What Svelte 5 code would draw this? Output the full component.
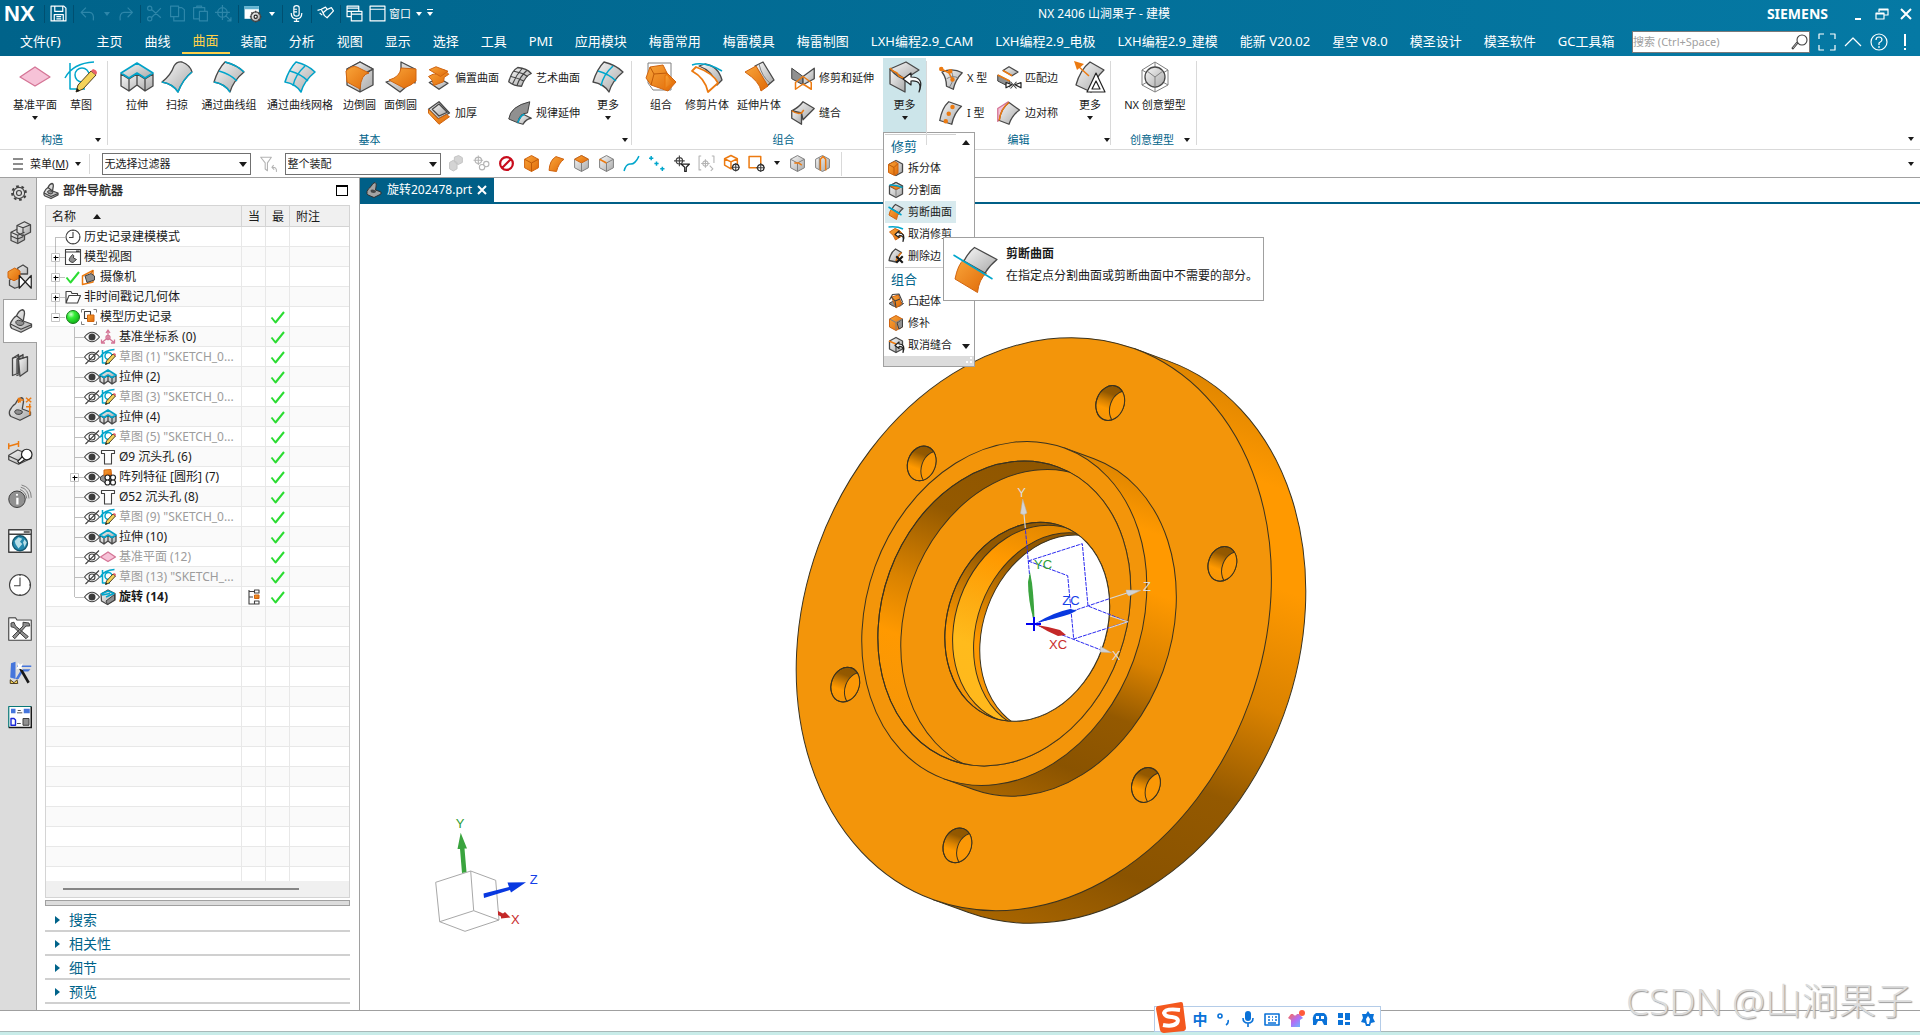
<script lang="ts">
	type Shape = [kind: string, d: string];
	type Tool = { label: string; icon: string; w?: number; arrow?: boolean };
	type TreeRow = {
		label: string;
		icons: string[];
		level: number;
		box?: '+' | '-';
		muted?: boolean;
		bold?: boolean;
		check?: boolean;
		mark?: boolean;
	};

	const dot = (x: number, y: number, r: number) =>
		`M${x - r} ${y}a${r} ${r} 0 1 0 ${2 * r} 0a${r} ${r} 0 1 0 ${-2 * r} 0Z`;

	const sheet = 'M1 21Q5 8 12 1Q24 4 31 11Q20 20 17 31Q12 23 1 21Z';
	const hex = 'M16 1L29 8V24L16 31L3 24V8Z';
	const undoArrow = 'M30 31Q33 18 22 19V23L14 17L22 10V14Q36 15 30 31Z';
	const bracket = 'M2 19Q5 12 10 9Q13 2 18 1Q22 2 20 10L19 16L30 20V24L16 31L4 26Q1 24 2 19Z';

	// every icon is drawn on a 32 x 32 grid
	const icons: Record<string, Shape[]> = {
		plane: [['pink', 'M1 16L16 6L31 16L16 25Z']],
		sketch: [
			['cyan', 'M5 2V28H20M0 17Q8 2 29 1' + dot(17, 14, 7)],
			['yellow', 'M11 31L13 24L26 10L31 14L18 28Z'],
			['red', 'M26 10L28 8Q32 9 32 12L31 14Z'],
			['black', 'M11 31L12 27L15 30Z']
		],
		extrude: [
			['steel', 'M0 13L8 18V30L0 25ZM8 18L16 13V24L8 30ZM16 13L24 18V30L16 24ZM24 18L32 13V25L24 30Z'],
			['steelcyan', 'M0 12L16 2L32 12L24 17L16 12L8 17Z']
		],
		sweep: [
			['steel', 'M1 21Q10 14 13 5Q16 0 21 1Q29 4 31 11Q22 18 17 31Q12 23 1 21Z'],
			['cyan', 'M1 21Q12 23 17 31Q22 18 31 11']
		],
		through: [['steel', sheet], ['cyan', 'M12 1Q24 4 31 11M6 10Q17 13 24 20M1 21Q12 23 17 31']],
		mesh: [['steelcyan', sheet], ['cyan', 'M6 10Q17 13 24 20M21 5Q11 14 9 25']],
		edgeblend: [
			['steel', hex + 'M16 16L29 8M16 16V31'],
			['steel', 'M3 8L16 1L29 8L17 14Z'],
			['orange', 'M2 10Q8 4 13 6L25 12Q17 13 16 28L3 21Z']
		],
		faceblend: [
			['steel', 'M16 1L30 8V22L16 14ZM1 21L14 17L22 25L15 31Z'],
			['orange', 'M16 7L31 8V20Q27 24 19 27L4 19Q15 16 16 7Z']
		],
		offset: [
			['steel', 'M3 22L15 16L28 23L16 31Z'],
			['orange', 'M2 14L8 11Q13 12 14 8L23 5L29 11L23 15L22 21L9 26Q8 18 2 14Z'],
			['orange', 'M3 5L12 1L28 7L18 14Z']
		],
		thicken: [
			['steel', 'M2 11L16 1L30 16L15 24Z'],
			['orange', 'M2 11L15 24L26 18L30 21L16 31L2 16Z'],
			['steel', 'M7 11L16 4L27 15L16 20Z']
		],
		studio: [
			['steel', 'M1 21Q5 6 13 2Q25 3 31 10Q23 13 18 27Q8 27 1 21Z'],
			['fine', 'M4 14Q13 16 21 20M8 7Q19 9 26 14M19 3Q11 12 6 24M25 6Q16 14 12 26']
		],
		law: [
			['dark', 'M1 24Q3 7 29 1L26 16Q15 16 13 29Z'],
			['steel', 'M13 29Q17 19 21 18L31 23Q24 24 20 31Z'],
			['cyan', 'M13 29Q17 18 22 18']
		],
		moremesh: [['steel', sheet], ['cyan', 'M6 10Q17 13 24 20M21 5Q11 14 9 25']],
		combine: [
			['thin', 'M3 2H26V29H8L3 22Z'],
			['orange', 'M1 17L5 6L18 4L22 12L31 21L23 30L6 24Z'],
			['steelO', 'M22 13L28 22L20 28V15Z'],
			['oedge', 'M5 6L9 13L6 24M9 13L22 12']
		],
		trimsheet: [
			['steel', 'M14 3Q27 5 31 19L26 24Q22 10 8 5Z'],
			['owhite', 'M1 10L5 6Q22 12 27 22L17 31Q14 17 1 10Z'],
			['cyan', 'M1 4Q14 0 31 10']
		],
		extendsheet: [
			['steel', 'M12 5L20 1L31 19L24 25Z'],
			['orange', 'M2 11L13 5L25 25L18 30Q17 21 2 11Z'],
			['thin', 'M16 3Q19 16 27 22']
		],
		trimextend: [
			['dark', 'M1 3L16 14V25L1 17Z'],
			['steel', 'M16 14L31 3V17L16 25Z'],
			['oline', 'M16 14L6 22V31L16 24L27 31V22Z']
		],
		sew: [
			['steel', 'M1 13L14 16V31L1 23Z'],
			['steel', 'M1 13Q10 9 16 1L31 10L16 25L14 16Z'],
			['oline', 'M1 13Q8 18 14 16L17 12']
		],
		moretrim: [
			['steel', 'M1 8L17 1L30 9L16 18Z'],
			['steel', 'M1 8Q10 18 16 18V31L1 23Z'],
			['oline', 'M1 7L4 10L8 12L10 15L16 18'],
			['white', 'M30 31Q34 19 22 20V24L14 18L22 12V16Q36 16 30 31Z']
		],
		xform: [
			['steel', 'M4 8Q18 2 31 9Q22 18 19 31L10 27Q10 16 4 8Z'],
			['thin', 'M16 6Q22 17 14 28M10 17Q18 12 26 16'],
			['oline', 'M3 4L13 9L18 18'],
			['odot', dot(3, 4, 3) + dot(15, 7, 3) + dot(18, 18, 3)]
		],
		iform: [
			['steel', 'M1 26Q4 9 13 1L30 7Q20 16 17 31Z'],
			['odot', dot(18, 8, 3) + dot(13, 17, 3) + dot(9, 27, 3)]
		],
		match: [
			['steel', 'M8 6L16 1L28 8L20 13Z'],
			['oline', 'M8 6L20 13'],
			['dark', 'M1 12L17 20V28L1 20Z'],
			['oline', 'M1 12L17 20'],
			['white', 'M12 22L20 25L12 29ZM32 22L24 25L32 29Z'],
			['fine', 'M18 21L26 30M26 21L18 30']
		],
		symmetry: [['pink', 'M1 10L15 1L10 20L1 27Z'], ['steel', 'M3 26Q5 10 16 2L30 12Q20 19 16 31Z'], ['oline', 'M3 26Q5 10 16 2']],
		moreedit: [
			['steel', 'M2 24Q6 9 16 1L30 9Q20 18 17 31Z'],
			['oline', 'M15 15L4 5'],
			['odot', 'M0 0L10 3L3 9Z'],
			['white', 'M22 12L31 31H13ZM22 20L18 28H26Z']
		],
		realize: [
			['thin', 'M16 1L29 9V24L16 31L3 24V9ZM3 9L29 24M29 9L3 24M16 1V31'],
			['steel', dot(16, 16, 10)],
			['thin', 'M16 16V26M16 16L8 10M16 16L24 10']
		],
		cube: [['orange', hex], ['oedge', 'M3 8L16 15L29 8M16 15V31']],
		face: [['orange', 'M2 29Q3 10 15 3L30 8Q20 15 16 31Z']],
		topcube: [['softsteel', hex], ['orange', 'M3 8L16 1L29 8L16 15Z'], ['thin', 'M16 15V31']],
		edgecube: [['softsteel', hex], ['thin', 'M16 15V31M16 15L29 8'], ['oline', 'M3 8L16 15']],
		split: [['steel', hex], ['orange', 'M1 9L13 3L20 7V26L13 31L1 25Z'], ['oedge', 'M1 9L12 15L20 7M12 15V30']],
		divide: [['steel', hex], ['steel', 'M3 8L16 1L29 8L16 15Z'], ['orange', 'M5 8L27 10L16 15Z'], ['cyan', 'M3 6Q16 5 29 11'], ['thin', 'M16 15V31']],
		snip: [
			['orange', 'M2 22Q4 12 8 9L23 18Q18 22 17 31Z'],
			['steel', 'M8 10Q11 4 15 1L30 9Q25 13 22 18Z'],
			['cyan', 'M1 6L27 22']
		],
		untrim: [['orange', 'M3 12L14 5Q24 7 31 18L15 28Q12 18 3 12Z'], ['cyan', 'M1 2Q18 0 30 6'], ['white', undoArrow]],
		deledge: [
			['steel', 'M2 25Q5 9 15 2L27 9Q19 16 16 28Z'],
			['oline', 'M27 9Q19 16 16 26'],
			['black', 'M15 18L18 15L31 28L28 31ZM28 15L31 18L18 31L15 28Z']
		],
		emboss: [['dark', 'M2 21Q16 10 31 21Q18 34 2 21Z'], ['orange', 'M7 8L21 4L27 22L16 30Z'], ['fine', 'M7 8L14 16L16 29M14 16L24 12M3 14L9 3L22 2L29 18']],
		patch: [['orange', hex], ['dark', 'M29 8V24L22 28L18 16Z'], ['thin', 'M3 8L16 15L29 8M16 15V31']],
		unsew: [['steel', hex], ['oline', 'M2 8L16 14'], ['fine', 'M16 15V31'], ['white', undoArrow]],
		save: [['wl', 'M2 2H26L30 6V30H2ZM9 2V12H24V2M8 30V18H25V30M12 22H21M12 26H21']],
		undo: [['dim', 'M13 5L4 14L13 23M4 14H20Q29 15 27 29']],
		redo: [['dim', 'M20 5L29 14L20 23M29 14H13Q4 15 6 29']],
		cut: [['dim', 'M10 24L28 6M10 8L28 24' + dot(7, 6, 4) + dot(7, 26, 4)]],
		copy: [['dim', 'M3 2H18V22H3ZM9 22V30H29V9L24 5H18']],
		paste: [['dim', 'M14 26H3V5H24V12M9 5V2H18V5M14 12H29V30H14Z']],
		target: [['dim', dot(14, 14, 9) + 'M14 0V28M0 14H28M20 20L30 30M30 23V30H23']],
		options: [
			['wbox', 'M1 2H28V26H1Z'],
			['teal', 'M1 2H28V8H1Z'],
			['steel', dot(22, 22, 9)],
			['white', dot(22, 22, 3)],
			['fine', 'M22 11V14M22 30V33M11 22H14M30 22H33M14 14L17 17M27 27L30 30M30 14L27 17']
		],
		mic: [['wl', 'M11 5Q11 1 16 1Q21 1 21 5V17Q21 21 16 21Q11 21 11 17ZM6 15Q6 26 16 26Q26 26 26 15M16 26V31M11 31H21M11 8H17M11 13H17']],
		touch: [['wl', 'M1 10L8 8L14 20L19 24L31 11L27 5L18 9L12 14M8 8L16 4L20 9M5 15L10 19']],
		windows: [['wl', 'M2 2H24V12H2ZM2 6H24M2 12V22H10M10 12H30V30H10ZM10 17H30']],
		window: [['wl', 'M2 2H30V30H2ZM2 8H30']],
		gear: [['fine', dot(16, 16, 4) + dot(16, 16, 9)], ['teeth', dot(16, 16, 11)]],
		assembly: [['steel', 'M4 15L14 10L22 14V25L13 30L4 26Z'], ['steel', 'M12 6L22 1L30 5V15L20 20L12 15Z'], ['fine', 'M12 6L20 9L30 5M20 9V19M4 15L13 19L22 15M13 19V29M4 20L13 24L20 21']],
		constraint: [['steel', 'M13 4L20 0L26 4V12H13ZM2 20L15 14V29L9 31L2 27Z'], ['orange', 'M0 9L9 4L16 8V17L8 21L0 17Z'], ['white', 'M15 14V31L31 14V31Z']],
		part: [['steel', bracket], ['dark', 'M9 17Q11 13 19 17Q22 20 16 22Q9 22 9 17Z'], ['fine', 'M2 20L16 27L30 21M10 9L19 16']],
		tabpart: [['tabsteel', bracket], ['tabhole', 'M9 17Q11 13 19 17Q22 20 16 22Q9 22 9 17Z']],
		books: [['steel', 'M6 7L14 2V27L6 30ZM12 8L20 2V27L12 30Z'], ['steel', 'M14 9L26 5V24L16 31Z'], ['fine', 'M6 7L20 3M13 8L26 5']],
		hdpart: [['steel', bracket], ['dark', 'M9 19Q11 15 19 19Q20 22 16 23Q9 24 9 19Z'], ['oline', 'M14 1V8M15 4H21M29 9V24M17 1L14 4L17 7M24 1L31 7M31 1L24 7M24 13H31']],
		measure: [['steel', 'M1 19L13 12L27 17L31 23L14 31L1 25Z'], ['fine', 'M1 20L14 26L30 21'], ['oline', 'M1 3V11M1 7L15 3M14 0V8'], ['white', dot(25, 18, 7)], ['white', 'M19 21L13 27L15 30L22 25Z']],
		info: [['dark', dot(12, 19, 11)], ['wfill', dot(12, 13, 1.5) + 'M11 17H14V26H11Z'], ['thin', 'M17 3Q27 5 28 18M18 0Q31 3 31 17M16 6Q24 9 25 18']],
		web: [['wbox', 'M1 1H31V31H1Z'], ['line', 'M1 1H31V31H1ZM1 7H31M21 4H29'], ['globe', dot(16, 19, 10)], ['continent', 'M9 16L14 11L19 13L16 17L19 20L14 26L10 20ZM22 14L25 18L22 24L20 18Z']],
		clock: [['wbox', dot(16, 16, 14)], ['fine', dot(16, 16, 14) + 'M16 6V17H8M16 2V4M16 28V30M28 16H30']],
		tools: [['wbox', 'M1 3H31V31H1Z'], ['fine', 'M1 1H10L12 4H31V31H1Z'], ['dark', 'M4 8L8 7L10 12L27 26L24 29L8 14L4 13ZM20 7L28 8L29 12L24 12L9 29L6 26L20 12Z']],
		wizard: [['blue', 'M4 3L10 1V24L3 22ZM12 6H31V8H12ZM18 11H30L27 14H20L14 24H10Z'], ['yellow', 'M3 25L8 29L12 25L13 30H3Z'], ['black', 'M15 11L18 9L29 28L26 30Z'], ['wfill', 'M13 2L16 5L20 3L18 8L20 12L15 10L11 11L13 7Z']],
		roles: [['wbox', 'M1 2H31V30H1Z'], ['tealline', 'M31 2H1V30'], ['black', 'M30 2H32V31H1V29H30ZM13 7H17V8H13ZM12 10H19V11H12ZM12 24H17V25H12Z'], ['blue', 'M4 5H10V11H4ZM21 5H29V11H21Z'], ['blueline', 'M4 18H8L10 20V27H4Z'], ['dark', 'M20 18H28V27H20Z']],
		view: [['wbox', 'M2 2H30V30H2Z'], ['fine', 'M1 1H31V31H1ZM1 6H31M22 4H29'], ['dark', 'M8 22Q9 17 15 11Q19 12 17 18L23 21L16 27Q10 27 8 22Z']],
		camera: [['oline', 'M3 14L24 3V26L3 31Z'], ['dark', 'M8 14L20 9L27 14V22L12 27Z'], ['oedge', 'M24 3L20 9']],
		folder: [['wbox', 'M2 28V5H12L14 9H25V13H30L25 28Z'], ['fine', 'M2 28V5H12L14 9H25V13M2 28L8 13H31L25 28Z']],
		tick: [['tick', 'M3 17L11 27L28 6']],
		ball: [['ball', dot(16, 16, 13)]],
		history: [['thin', 'M1 7V1H7M25 1H31V7M31 25V31H25M7 31H1V25'], ['wbox', 'M7 5H19V19H7Z'], ['fine', 'M7 5H19V19H7Z'], ['orange', 'M13 12H26V25H13Z']],
		eye: [['fine', 'M1 16Q16 -3 31 16Q16 35 1 16Z'], ['eyeball', dot(16, 16, 7)]],
		hidden: [['fine', 'M1 16Q16 -3 31 16Q16 35 1 16ZM3 30L30 3' + dot(16, 16, 6)]],
		csys: [['pinkline', 'M16 3V17L4 27M16 17L28 27M12 8L16 2L20 8M3 21V28H10M22 28H29V21' + dot(16, 17, 4)]],
		cbore: [['wbox', 'M3 3H29V9H23V30H9V9H3Z'], ['fine', 'M3 3H29V9H23V30H9V9H3Z']],
		pattern: [['dark', 'M1 16L12 9L23 14V22L11 28L1 22Z'], ['orange', 'M8 2L22 1L23 12L8 13Z'], ['white', dot(15, 17, 5) + dot(26, 17, 5) + dot(15, 27, 5) + dot(26, 27, 5)]],
		revolve: [['steel', 'M2 10L16 2L30 9V22L15 31L3 24Z'], ['dark', 'M12 24L29 11V22L15 31Z'], ['cyan', 'M2 10L16 4L28 9L12 16M4 12L20 9']],
		relation: [['fine', 'M6 2V30H18M6 5H18M6 16H14M17 2H26V8H17ZM17 24H26V30H17Z'], ['orange', 'M17 12H26V19H17Z']],
		funnel: [['faint', 'M3 4H22L15 14V28L11 25V14ZM31 30Q32 21 23 22L26 18M23 22L27 26']],
		faintcube: [['faintfill', 'M3 14L10 10L17 14V26L10 30L3 26ZM12 4L20 1L27 5V14L19 18L12 13Z']],
		link: [['faint', dot(10, 10, 6) + 'M10 1V19M1 10H19' + dot(17, 23, 5) + dot(25, 17, 5)]],
		deny: [['deny', dot(16, 16, 12) + 'M8 24L24 8']],
		spline: [['cyan', 'M2 30Q6 15 15 17Q23 17 30 2']],
		points: [['cyan', 'M6 2V10M2 6H10M16 12V20M12 16H20M27 22V30M23 26H31']],
		filterpt: [['fine', dot(12, 11, 6) + 'M12 1V21M2 11H22'], ['white', 'M15 17H31L25 23V31H22V23Z']],
		brackets: [['faint', 'M6 2H2V28H6M26 2H30V15' + dot(14, 16, 5) + 'M14 8V24M6 16H22M22 20L28 26L24 30']],
		cubept: [['oline', 'M15 1L27 7V19L15 26L3 19V7ZM3 7L15 13L27 7M15 13V26'], ['white', dot(24, 23, 6)], ['fine', 'M24 15V31M16 23H32']],
		rectpt: [['oline', 'M2 3H24V24H2Z'], ['white', dot(24, 24, 6)], ['fine', 'M24 15V32M15 24H32']],
		seccube: [['softsteel', hex], ['thin', 'M3 8L16 15L29 8M16 15V31'], ['oline', 'M10 15H18L24 19']],
		bodyface: [['softsteel', hex], ['thin', 'M10 5V27'], ['oline', 'M12 29V8L17 3L22 8V29']]
	};

	type Quick = string | number;
	// zeros are separators, words are buttons
	const quick: Quick[] = ['save', 0, 'undo', '▾dim', 'redo', 0, 'cut', 'copy', 'paste', 'target', 0, 'options', '▾', 0, 'mic', 0, 'touch', 0, 'windows', 'window'];

	const menus = ['主页', '曲线', '曲面', '装配', '分析', '视图', '显示', '选择', '工具', 'PMI', '应用模块', '梅雷常用', '梅雷模具', '梅雷制图', 'LXH编程2.9_CAM', 'LXH编程2.9_电极', 'LXH编程2.9_建模', '能新 V20.02', '星空 V8.0', '模圣设计', '模圣软件', 'GC工具箱'];

	type Block = { big?: Tool; stack?: Tool[]; w?: number; open?: boolean };
	const groups: { name: string; caret: boolean; blocks: Block[] }[] = [
		{
			name: '构造',
			caret: true,
			blocks: [{ big: { label: '基准平面', icon: 'plane', w: 52, arrow: true } }, { big: { label: '草图', icon: 'sketch', w: 40 } }]
		},
		{
			name: '基本',
			caret: true,
			blocks: [
				{ big: { label: '拉伸', icon: 'extrude', w: 40 } },
				{ big: { label: '扫掠', icon: 'sweep', w: 40 } },
				{ big: { label: '通过曲线组', icon: 'through', w: 64 } },
				{ big: { label: '通过曲线网格', icon: 'mesh', w: 78 } },
				{ big: { label: '边倒圆', icon: 'edgeblend', w: 41 } },
				{ big: { label: '面倒圆', icon: 'faceblend', w: 41 } },
				{ stack: [{ label: '偏置曲面', icon: 'offset' }, { label: '加厚', icon: 'thicken' }], w: 81 },
				{ stack: [{ label: '艺术曲面', icon: 'studio' }, { label: '规律延伸', icon: 'law' }], w: 86 },
				{ big: { label: '更多', icon: 'moremesh', w: 40, arrow: true } }
			]
		},
		{
			name: '组合',
			caret: false,
			blocks: [
				{ big: { label: '组合', icon: 'combine', w: 40 } },
				{ big: { label: '修剪片体', icon: 'trimsheet', w: 52 } },
				{ big: { label: '延伸片体', icon: 'extendsheet', w: 52 } },
				{ stack: [{ label: '修剪和延伸', icon: 'trimextend' }, { label: '缝合', icon: 'sew' }], w: 98 },
				{ big: { label: '更多', icon: 'moretrim', w: 43, arrow: true }, open: true }
			]
		},
		{
			name: '编辑',
			caret: true,
			blocks: [
				{ stack: [{ label: 'X 型', icon: 'xform' }, { label: 'I 型', icon: 'iform' }], w: 58 },
				{ stack: [{ label: '匹配边', icon: 'match' }, { label: '边对称', icon: 'symmetry' }], w: 79 },
				{ big: { label: '更多', icon: 'moreedit', w: 40, arrow: true } }
			]
		},
		{ name: '创意塑型', caret: true, blocks: [{ big: { label: 'NX 创意塑型', icon: 'realize', w: 70 } }] }
	];

	const gallery = [
		{
			title: '修剪',
			items: [
				{ label: '拆分体', icon: 'split' },
				{ label: '分割面', icon: 'divide' },
				{ label: '剪断曲面', icon: 'snip' },
				{ label: '取消修剪', icon: 'untrim' },
				{ label: '删除边', icon: 'deledge' }
			]
		},
		{
			title: '组合',
			items: [
				{ label: '凸起体', icon: 'emboss' },
				{ label: '修补', icon: 'patch' },
				{ label: '取消缝合', icon: 'unsew' }
			]
		}
	];

	const picks = ['faintcube', 'link', 'deny', 'cube', 'face', 'topcube', 'edgecube', 'spline', 'points', 'filterpt', 'brackets', 'cubept', 'rectpt'];
	const rail = ['gear', 'assembly', 'constraint', 'part', 'books', 'hdpart', 'measure', 'info', 'web', 'clock', 'tools', 'wizard', 'roles'];

	const tree: TreeRow[] = [
		{ label: '历史记录建模模式', icons: ['clock'], level: 0 },
		{ label: '模型视图', icons: ['view'], level: 0, box: '+' },
		{ label: '摄像机', icons: ['tick', 'camera'], level: 0, box: '+' },
		{ label: '非时间戳记几何体', icons: ['folder'], level: 0, box: '+' },
		{ label: '模型历史记录', icons: ['ball', 'history'], level: 0, box: '-', check: true },
		{ label: '基准坐标系 (0)', icons: ['eye', 'csys'], level: 1, check: true },
		{ label: '草图 (1) "SKETCH_0...', icons: ['hidden', 'sketch'], level: 1, muted: true, check: true },
		{ label: '拉伸 (2)', icons: ['eye', 'extrude'], level: 1, check: true },
		{ label: '草图 (3) "SKETCH_0...', icons: ['hidden', 'sketch'], level: 1, muted: true, check: true },
		{ label: '拉伸 (4)', icons: ['eye', 'extrude'], level: 1, check: true },
		{ label: '草图 (5) "SKETCH_0...', icons: ['hidden', 'sketch'], level: 1, muted: true, check: true },
		{ label: 'Ø9 沉头孔 (6)', icons: ['eye', 'cbore'], level: 1, check: true },
		{ label: '阵列特征 [圆形] (7)', icons: ['eye', 'pattern'], level: 1, box: '+', check: true },
		{ label: 'Ø52 沉头孔 (8)', icons: ['eye', 'cbore'], level: 1, check: true },
		{ label: '草图 (9) "SKETCH_0...', icons: ['hidden', 'sketch'], level: 1, muted: true, check: true },
		{ label: '拉伸 (10)', icons: ['eye', 'extrude'], level: 1, check: true },
		{ label: '基准平面 (12)', icons: ['hidden', 'plane'], level: 1, muted: true, check: true },
		{ label: '草图 (13) "SKETCH_...', icons: ['hidden', 'sketch'], level: 1, muted: true, check: true },
		{ label: '旋转 (14)', icons: ['eye', 'revolve'], level: 1, bold: true, check: true, mark: true }
	];
	const blankRows = Array.from({ length: 14 });
	const sections = ['搜索', '相关性', '细节', '预览'];

	// bolt holes on the flange, in the plane of its front face
	const holes = Array.from({ length: 6 }, (_, i) => {
		const a = ((i * 60 - 1.2) * Math.PI) / 180;
		return { x: 183 * Math.sin(a), y: -234 * Math.cos(a) };
	});

	function twig(row: TreeRow, i: number) {
		const top = i === 0 ? 10 : 0;
		const bottom = (row.level === 0 && i === 4) || i === tree.length - 1 ? 10 : 20;
		return `M4 ${top}V${bottom}M5 10H14`;
	}
</script>

{#snippet icon(name: string, size: number)}
	<svg class="icon" width={size} height={size} viewBox="0 0 32 32" aria-hidden="true">
		{#each icons[name] as [kind, d]}
			<path class={kind} {d} />
		{/each}
	</svg>
{/snippet}

<svg class="defs" width="0" height="0" aria-hidden="true">
	<defs>
		<linearGradient id="steel" x1="0" y1="0" x2="1" y2="1">
			<stop offset="0" stop-color="#f8f8f8" /><stop offset="1" stop-color="#a8a8a8" />
		</linearGradient>
		<linearGradient id="orange" x1="0" y1="0" x2="1" y2="1">
			<stop offset="0" stop-color="#f9a53a" /><stop offset="1" stop-color="#e06a08" />
		</linearGradient>
		<linearGradient id="shirt" x1="0" y1="0" x2="1" y2="1">
			<stop offset="0" stop-color="#ff6a50" /><stop offset="0.5" stop-color="#b070f8" /><stop offset="1" stop-color="#58c8ff" />
		</linearGradient>
		<radialGradient id="ball" cx="0.35" cy="0.3" r="0.7">
			<stop offset="0" stop-color="#d0ffd0" /><stop offset="0.4" stop-color="#34ee38" /><stop offset="1" stop-color="#13b41a" />
		</radialGradient>
	</defs>
</svg>

<div class="app">
	<header class="titlebar">
		<div class="quick">
			<strong class="nx">NX</strong>
			<i class="vline"></i>
			{#each quick as q}
				{#if q === 0}
					<i class="vline"></i>
				{:else if q === '▾' || q === '▾dim'}
					<button class="caretbtn" class:off={q === '▾dim'} aria-label="展开"><i class="caret"></i></button>
				{:else}
					<button class="qbtn" aria-label={String(q)}>{@render icon(String(q), 17)}</button>
				{/if}
			{/each}
			<button class="winbtn">窗口<i class="caret"></i></button>
			<button class="caretbtn" aria-label="自定义"><i class="caret bar"></i></button>
		</div>
		<div class="title">NX 2406 山涧果子 - 建模</div>
		<div class="wincontrols">
			<strong>SIEMENS</strong>
			<button aria-label="最小化"><svg width="14" height="14"><path class="wl x" d="M4 12H10" /></svg></button>
			<button aria-label="还原"><svg width="14" height="14"><path class="wl" d="M4 5V2H13V8H9M1 6H9V12H1ZM1 7H9M4 3H13" /></svg></button>
			<button aria-label="关闭"><svg width="14" height="14"><path class="wl x" d="M2 2L12 12M12 2L2 12" /></svg></button>
		</div>
	</header>

	<nav class="menubar">
		<button class="file">文件(F)</button>
		{#each menus as menu}
			<button class:selected={menu === '曲面'}>{menu}</button>
		{/each}
		<div class="search">
			<input type="text" placeholder="搜索 (Ctrl+Space)" aria-label="搜索" />
			<svg width="18" height="18" viewBox="0 0 18 18"><path class="fine" d="M16 7a5 5 0 1 0 -10 0a5 5 0 1 0 10 0ZM7 10L2 16L1 15L6 9" /></svg>
		</div>
		<div class="corner">
			<button aria-label="全屏"><svg width="18" height="18"><path class="wl" d="M1 6V1H6M12 1H17V6M17 12V17H12M6 17H1V12" /></svg></button>
			<button aria-label="折叠"><svg width="18" height="18"><path class="wl" d="M1 13L9 5L17 13" /></svg></button>
			<button aria-label="帮助"><svg width="18" height="18"><path class="wl" d="M17 9a8 8 0 1 0 -16 0a8 8 0 1 0 16 0ZM6 7Q6 4 9 4Q12 4 12 7Q12 8 9 10V12M9 13V15" /></svg></button>
			<button aria-label="提示"><svg width="18" height="18"><path class="wl x" d="M9 1V13M9 15V17" /></svg></button>
		</div>
	</nav>

	<div class="ribbon">
		{#each groups as group}
			<section class="group">
				<div class="tools">
					{#each group.blocks as block}
						{#if block.stack}
							<div class="stack" style:width="{block.w}px">
								{#each block.stack as tool}
									<button>{@render icon(tool.icon, 24)}<span>{tool.label}</span></button>
								{/each}
							</div>
						{:else if block.big}
							<div class="slot" class:open={block.open}>
								<button class="big" style:width="{block.big.w}px">
									{@render icon(block.big.icon, 32)}
									<span>{block.big.label}</span>
									{#if block.big.arrow}<i class="caret"></i>{/if}
								</button>
								{#if block.open}
									<div class="gallery">
										<div class="galleryrow">
											<div class="gallerylist">
												{#each gallery as part}
													<h3>{part.title}</h3>
													{#each part.items as item}
														<button class:hot={item.icon === 'snip'}>
															{@render icon(item.icon, 16)}{item.label}
														</button>
													{/each}
												{/each}
											</div>
											<div class="galleryscroll"><i class="caret up"></i><i class="caret down"></i></div>
										</div>
										<div class="grip"><svg width="8" height="8"><path class="wfill" d="M5 0H7V2H5ZM5 4H7V6H5ZM1 4H3V6H1Z" /></svg></div>
										<div class="tooltip" role="tooltip">
											{@render icon('snip', 48)}
											<div>
												<strong>剪断曲面</strong>
												<p>在指定点分割曲面或剪断曲面中不需要的部分。</p>
											</div>
										</div>
									</div>
								{/if}
							</div>
						{/if}
					{/each}
				</div>
				<footer>
					<span>{group.name}</span>
					{#if group.caret}<i class="caret"></i>{/if}
				</footer>
			</section>
		{/each}
		<i class="caret end"></i>
	</div>

	<div class="selectbar">
		<button class="menubtn">
			<svg width="10" height="12"><path class="bars" d="M0 1H10M0 6H10M0 11H10" /></svg>菜单(<u>M</u>)<i class="caret"></i>
		</button>
		<label class="combo filter">
			<select aria-label="选择过滤器"><option>无选择过滤器</option></select>
		</label>
		<button class="pick wide" aria-label="重置过滤器">{@render icon('funnel', 18)}</button>
		<label class="combo scope">
			<select aria-label="选择范围"><option>整个装配</option></select>
		</label>
		<div class="picks">
			{#each picks as pick}
				<button class="pick" aria-label={pick}>{@render icon(pick, 17)}</button>
			{/each}
			<button class="caretbtn" aria-label="更多选择"><i class="caret"></i></button>
			<button class="pick" aria-label="截面">{@render icon('seccube', 17)}</button>
			<button class="pick" aria-label="体面">{@render icon('bodyface', 17)}</button>
		</div>
		<i class="caret end"></i>
	</div>

	<div class="body">
		<nav class="rail">
			{#each rail as item}
				<button class:active={item === 'part'} class:first={item === 'gear'} aria-label={item}>
					{@render icon(item, item === 'gear' ? 20 : 24)}
				</button>
			{/each}
		</nav>

		<aside class="navigator">
			<div class="panelhead">
				{@render icon('part', 16)}
				<h2>部件导航器</h2>
				<button aria-label="最大化"></button>
			</div>
			<div class="treebox">
				<div class="treeview">
					<table>
						<colgroup><col /><col class="narrow" /><col class="narrow" /><col class="note" /></colgroup>
						<thead>
							<tr><th>名称 <i class="caret up"></i></th><th>当</th><th>最</th><th>附注</th></tr>
						</thead>
						<tbody>
							{#each tree as row, i}
								<tr class:muted={row.muted} class:bold={row.bold}>
									<td>
										<div class="node" class:child={row.level === 1}>
											<svg width="14" height="20">
												<path class="twig" d={twig(row, i)} />
												{#if row.box}
													<path class="twigbox" d="M0 6H8V14H0Z" />
													<path class="twigsign" d={row.box === '+' ? 'M2 10H7M4 8V13' : 'M2 10H7'} />
												{/if}
											</svg>
											{#each row.icons as name}{@render icon(name, 16)}{/each}
											<span>{row.label}</span>
										</div>
									</td>
									<td>{#if row.mark}{@render icon('relation', 16)}{/if}</td>
									<td>{#if row.check}{@render icon('tick', 16)}{/if}</td>
									<td></td>
								</tr>
							{/each}
							{#each blankRows as _}
								<tr><td></td><td></td><td></td><td></td></tr>
							{/each}
						</tbody>
					</table>
				</div>
				<div class="hscroll"><i></i></div>
			</div>
			<div class="splitter"></div>
			{#each sections as section}
				<button class="fold">{section}</button>
			{/each}
		</aside>

		<main>
			<div class="doctabs">
				<button>{@render icon('tabpart', 16)}旋转202478.prt<svg width="10" height="10"><path class="wl x" d="M1 1L9 9M9 1L1 9" /></svg></button>
			</div>
			<svg class="canvas" viewBox="360 204 1560 806">
				<defs>
					<linearGradient id="outer" x1="0" y1="0" x2="0" y2="1">
						<stop offset="0" stop-color="#e08600" /><stop offset="0.14" stop-color="#ff9900" />
						<stop offset="0.3" stop-color="#ff9900" /><stop offset="0.5" stop-color="#da8200" />
						<stop offset="0.67" stop-color="#945900" /><stop offset="0.85" stop-color="#8a5300" /><stop offset="1" stop-color="#a86500" />
					</linearGradient>
					<linearGradient id="inner" x1="0" y1="0" x2="0" y2="1">
						<stop offset="0" stop-color="#8f5600" /><stop offset="0.25" stop-color="#945900" />
						<stop offset="0.5" stop-color="#d98200" /><stop offset="0.68" stop-color="#ff9900" /><stop offset="1" stop-color="#f3950a" />
					</linearGradient>
					<linearGradient id="bore" x1="0" y1="0" x2="0" y2="1">
						<stop offset="0" stop-color="#e08600" /><stop offset="0.25" stop-color="#ff9900" />
						<stop offset="0.5" stop-color="#fdac12" /><stop offset="0.7" stop-color="#ffbb1c" /><stop offset="1" stop-color="#ffb81c" />
					</linearGradient>
					<clipPath id="pocket"><ellipse cx="-31" rx="122" ry="156" /></clipPath>
					<clipPath id="boreclip"><ellipse cx="-7" rx="79.5" ry="101.8" /></clipPath>
					<clipPath id="bolt"><ellipse rx="13.9" ry="17.8" /></clipPath>
				</defs>

				<g class="model" transform="translate(1033.8 624.2) rotate(20)">
					<path d="M0 -293.3H36.6A229.2 293.3 0 0 1 36.6 293.3H0Z" />
					<ellipse class="flat" rx="229.2" ry="293.3" />
					<path d="M-31.4 -176H0A137.5 176 0 0 1 0 176H-31.4Z" />
					<ellipse class="flat" cx="-31.4" rx="137.5" ry="176" />
					<ellipse fill="url(#inner)" cx="-31.4" rx="122" ry="156" />
					<g clip-path="url(#pocket)">
						<ellipse class="flat" cx="-7" rx="122" ry="156" />
					</g>
					<ellipse fill="url(#inner)" cx="-7" rx="79.5" ry="101.8" />
					<g clip-path="url(#boreclip)">
						<ellipse fill="url(#bore)" cx="1.3" rx="79.5" ry="101.8" />
						<ellipse fill="url(#inner)" cx="23.6" rx="79.5" ry="101.8" />
						<ellipse fill="#fff" cx="30.2" rx="79.5" ry="101.8" />
					</g>
					<ellipse fill="none" cx="-31.4" rx="122" ry="156" />
					<ellipse fill="none" cx="-7" rx="79.5" ry="101.8" />
					{#each holes as hole}
						<g transform="translate({hole.x} {hole.y})">
							<ellipse fill="url(#inner)" rx="13.9" ry="17.8" />
							<g clip-path="url(#bolt)"><ellipse fill="#fb9806" cx="14.5" rx="13.9" ry="17.8" /></g>
							<ellipse fill="none" rx="13.9" ry="17.8" />
						</g>
					{/each}
				</g>

				<g class="wcs">
					<path class="frame" d="M1028.3 561L1082.3 543.7L1088 606L1127.7 621.7L1073.7 639L1067.7 575.7ZM1034 624L1025.3 528.3M1034 624L1101 650M1034 624L1110 598.5" />
					<path class="silver" d="M1025.3 528L1024 514M1110 598.5L1127 593M1110 616L1127.7 621.7L1109 628" />
					<path class="cone" d="M1022.7 499L1020.5 513.5Q1023.5 516 1027 513ZM1141 590.3L1126 590Q1126 594 1129 596ZM1111.7 652.7L1100.5 646.5L1100 652Z" />
					<path class="green" d="M1033.5 620Q1028 600 1028 582L1030 572L1032 583Q1034 600 1034.5 620Z" />
					<path class="navy" d="M1037 622.5Q1055 612 1070 609L1077 610.5L1070 614Q1055 619 1037 622.5Z" />
					<path class="crimson" d="M1037 625Q1050 627 1060 630L1066 635L1058 636Q1048 632 1037 625Z" />
					<path class="cross" d="M1026 624H1041M1034 617V631" />
					<text class="tsilver" x="1021.7" y="497">Y</text>
					<text class="tsilver" x="1147" y="591">Z</text>
					<text class="tsilver" x="1116" y="660">X</text>
					<text class="tgreen" x="1043" y="569">YC</text>
					<text class="tnavy" x="1071" y="605">ZC</text>
					<text class="tcrimson" x="1058" y="649">XC</text>
				</g>

				<g class="triad">
					<path class="cubeline" d="M435.7 882.3L470.7 871L495.7 880.3L499 920L465 931.3L439.7 921.7ZM470.7 871L473.7 910.7L439.7 921.7M473.7 910.7L499 920" />
					<path class="green" d="M462 873L460 849H457.5L460.7 832.7L467 848.5H464.5L466.5 872Z" />
					<path class="navy" d="M483.5 893.5L509 887L507.5 882.5L526 882.3L511 892.5L510 890L484 898Z" />
					<path class="crimson" d="M498 911L503 913.5L505 912L510.5 917.5L501 918.5L501 916.5L498 915Z" />
					<text class="tgreen" x="460" y="828">Y</text>
					<text class="tnavy" x="533.7" y="884">Z</text>
					<text class="tcrimson" x="515.3" y="924">X</text>
				</g>
			</svg>
		</main>
	</div>

	<footer class="status"></footer>

	<div class="ime">
		<svg class="sogou" width="32" height="32" viewBox="0 0 32 32">
			<path class="sogoubg" d="M3 5L26 1Q28 1 28 3L31 27Q31 29 29 30L9 32Q6 32 5 29L1 8Q1 5 3 5Z" />
			<path class="sogous" d="M25 9Q10 7 9 12Q10 16 17 16Q25 17 22 22Q18 26 8 24" />
		</svg>
		<button>中</button>
		<button aria-label="标点"><svg width="16" height="16"><path class="imeline" d="M6 5a2 2 0 1 0 -4 0a2 2 0 1 0 4 0ZM12 9Q13 12 10 14" /></svg></button>
		<button aria-label="语音"><svg width="16" height="16"><path class="imefill" d="M5 3Q5 0 8 0Q11 0 11 3V7Q11 10 8 10Q5 10 5 7Z" /><path class="imeline" d="M3 7Q3 12 8 12Q13 12 13 7M8 12V16" /></svg></button>
		<button aria-label="键盘"><svg width="16" height="16"><path class="imeline" d="M1 3H15V14H1ZM4 6H6M8 6H9M11 6H13M4 9H6M8 9H9M11 9H13M4 12H12" /></svg></button>
		<button aria-label="皮肤"><svg width="18" height="18"><path class="shirt" d="M4 4H6Q8 7 10 4H12L16 8L13 10V17H4V10L1 8Z" /><path class="badge" d="M18 3a3 3 0 1 0 -6 0a3 3 0 1 0 6 0Z" /></svg></button>
		<button aria-label="游戏"><svg width="16" height="16"><path class="imefill" fill-rule="evenodd" d="M4 2H12Q16 4 15 10H1Q0 4 4 2ZM4 5V8H7V5ZM9 5V8H12V5ZM1 10H6L4 14H1ZM10 10H15V14H12Z" /></svg></button>
		<button aria-label="工具箱"><svg width="16" height="16"><path class="imefill" d="M2 2H7V7H2ZM9 2H14V9H9ZM2 9H7V14H2ZM9 11H14V14H9Z" /></svg></button>
		<button aria-label="设置"><svg width="16" height="16"><path class="imefill" fill-rule="evenodd" d="M8 0L10 3L14 3L13 7L15 11L11 12L10 15H6L5 12L1 11L3 7L2 3L6 3ZM8 5L6 8L7 13H9L10 8Z" /></svg></button>
	</div>
	<div class="watermark">CSDN @山涧果子</div>
</div>

<style>
	:global(body) {
		margin: 0;
	}

	.app {
		position: relative;
		display: flex;
		flex-direction: column;
		height: 100vh;
		min-height: 700px;
		overflow: hidden;
		background: #fff;
		color: #1a1a1a;
		font-family: 'Noto Sans', 'Noto Sans CJK SC', sans-serif;
		font-size: 12px;
		line-height: 16px;
	}

	.defs {
		position: absolute;
	}

	button {
		display: flex;
		align-items: center;
		justify-content: center;
		padding: 0;
		border: none;
		background: none;
		color: inherit;
		font: inherit;
		white-space: nowrap;
	}

	h2,
	h3,
	p {
		margin: 0;
		font-size: 12px;
		font-weight: normal;
	}

	.icon {
		flex: none;
		overflow: visible;
	}

	.caret {
		display: block;
		flex: none;
		border: 3px solid transparent;
		border-top: 4px solid currentColor;
		border-bottom: 0;
	}

	.caret.up {
		border: 4px solid transparent;
		border-bottom: 5px solid currentColor;
		border-top: 0;
	}

	.caret.down {
		border-width: 5px 4px 0;
	}

	.caret.bar {
		position: relative;
	}

	.caret.bar::before {
		content: '';
		position: absolute;
		left: -3px;
		top: -7px;
		width: 6px;
		height: 1px;
		background: currentColor;
	}

	/* icon paint */
	path {
		fill: none;
		stroke: none;
		stroke-width: 1.3;
		stroke-linejoin: round;
	}

	/* strokes keep their weight at every icon size */
	.icon path {
		vector-effect: non-scaling-stroke;
	}

	.steel { fill: url(#steel); stroke: #484848; }
	.softsteel { fill: url(#steel); stroke: #808080; stroke-width: 1; }
	.steelcyan { fill: url(#steel); stroke: #00a2c8; stroke-width: 1.6; }
	.steelO { fill: url(#orange); stroke: #e87810; }
	.dark { fill: #909090; stroke: #404040; stroke-width: 1; }
	.orange { fill: url(#orange); stroke: #d06410; stroke-width: 1; }
	.oedge { stroke: #c05a08; stroke-width: 1; }
	.oline { stroke: #ec7a10; stroke-width: 1.5; }
	.owhite { fill: #fff; stroke: #ec7a10; stroke-width: 1.8; }
	.odot { fill: #ec7a10; }
	.cyan { stroke: #00a6cc; stroke-width: 1.5; }
	.line { stroke: #404040; stroke-width: 1.4; }
	.fine { stroke: #404040; stroke-width: 1.1; }
	.thin { stroke: #808080; stroke-width: 1; }
	.teeth { stroke: #404040; stroke-width: 2; stroke-dasharray: 2.7 2.7; }
	.white { fill: #fff; stroke: #222; stroke-width: 1.2; }
	.wbox { fill: #fff; }
	.wfill { fill: #fff; }
	.continent { fill: #b8dfe8; }
	.teal { fill: #62b3d0; }
	.tealline { stroke: #087878; stroke-width: 1.2; }
	.blueline { stroke: #1a28d8; stroke-width: 1.4; }
	.pink { fill: #f6c2d7; stroke: #d47495; }
	.pinkline { stroke: #d47495; }
	.yellow { fill: #f4d35a; stroke: #504020; stroke-width: 1; }
	.red { fill: #e8606a; }
	.black { fill: #181818; }
	.blue { fill: #4676dc; }
	.globe { fill: #2388ad; stroke: #14566e; }
	.tick { stroke: #2bdc32; stroke-width: 2; }
	.ball { fill: url(#ball); stroke: #187a1c; stroke-width: 1; }
	.eyeball { fill: #3c3c3c; }
	.faint { stroke: #b4b4b4; stroke-width: 1.1; }
	.faintfill { fill: #d4d4d4; stroke: #c4c4c4; stroke-width: 1; }
	.deny { stroke: #c80c1c; stroke-width: 2.2; }
	.tabsteel { fill: #a4a4a4; stroke: #303030; stroke-width: 1; }
	.tabhole { fill: #484848; }
	.wl { stroke: #fff; stroke-width: 1.2; }
	.wl.x { stroke-width: 2; }
	.dim { stroke: #2d86a9; stroke-width: 1.2; }
	.bars { stroke: #1a1a1a; stroke-width: 1; }

	/* title bar and menus */
	.titlebar,
	.menubar {
		display: flex;
		align-items: center;
		flex: none;
		background: linear-gradient(90deg, #00638a, #0579a4);
		color: #fff;
	}

	.titlebar {
		height: 27px;
	}

	.titlebar > * {
		flex: 1;
	}

	.quick {
		display: flex;
		align-items: center;
	}

	.nx {
		width: 37px;
		padding-left: 4px;
		font: bold 22px/26px 'Liberation Sans', sans-serif;
	}

	.vline {
		width: 1px;
		height: 18px;
		margin: 0 2px 0 3px;
		background: #004f70;
	}

	.qbtn {
		width: 23px;
		height: 22px;
	}

	.quick > .caretbtn {
		width: 15px;
	}

	.caretbtn {
		height: 22px;
	}

	.off {
		color: #2d86a9;
	}

	.winbtn {
		font-size: 11px;
		gap: 5px;
	}

	.title {
		flex: none;
		padding-left: 290px;
	}

	.wincontrols {
		display: flex;
		align-items: center;
		justify-content: flex-end;
		padding-right: 2px;
	}

	.wincontrols strong {
		margin-right: 18px;
		font: bold 14px/16px 'Noto Sans', sans-serif;
	}

	.wincontrols button {
		width: 24px;
	}

	.menubar {
		height: 29px;
		font-size: 13px;
	}

	.menubar > button {
		height: 29px;
		padding: 0 11px;
		box-sizing: border-box;
		border-bottom: 2px solid transparent;
	}

	.menubar > .file {
		padding: 0 25px 0 20px;
	}

	.menubar > .selected {
		align-self: flex-start;
		height: 27px;
		color: #ffd04a;
		border-bottom-color: #ffd04a;
	}

	.search {
		display: flex;
		align-items: center;
		width: 176px;
		height: 20px;
		margin-left: auto;
		border: 1px solid #7a7a7a;
		background: #fff;
	}

	.search input {
		flex: 1;
		min-width: 0;
		padding: 0;
		border: none;
		outline: none;
		background: none;
		font: 11px/16px 'Noto Sans', 'Noto Sans CJK SC', sans-serif;
	}

	.search input::placeholder {
		color: #a0a0a0;
	}

	.corner {
		display: flex;
		padding: 0 2px 0 4px;
	}

	.corner button {
		width: 26px;
	}

	/* ribbon */
	.ribbon {
		display: flex;
		flex: none;
		position: relative;
		z-index: 2;
		height: 91px;
		padding-top: 2px;
		border-bottom: 1px solid #d9d9d9;
		font-size: 11px;
	}

	.group {
		display: flex;
		flex-direction: column;
		position: relative;
		padding: 0 7px 0 9px;
	}

	.group::after {
		content: '';
		position: absolute;
		right: 0;
		top: 3px;
		bottom: 4px;
		width: 1px;
		background: #d9d9d9;
	}

	.group:nth-child(2) {
		padding-right: 4px;
	}

	.group:nth-child(3) {
		padding-right: 1px;
	}

	.group:nth-child(4) {
		padding: 0 1px 0 6px;
	}

	.tools {
		display: flex;
		height: 74px;
	}

	.big {
		flex-direction: column;
		justify-content: flex-start;
		height: 74px;
		padding-top: 3px;
	}

	.big span {
		margin: 4px 0 3px;
	}

	.slot {
		position: relative;
	}

	.slot.open > .big {
		background: #cce5ea;
	}

	.stack {
		display: flex;
		flex-direction: column;
		padding-top: 2px;
		padding-left: 6px;
		box-sizing: border-box;
	}

	.stack button {
		justify-content: flex-start;
		gap: 4px;
		height: 35px;
	}

	.group footer {
		display: flex;
		align-items: center;
		height: 16px;
		color: #00638a;
	}

	.group footer span {
		flex: 1;
		text-align: center;
	}

	.group footer .caret,
	.end {
		color: #1a1a1a;
	}

	.end {
		margin: auto 6px 8px auto;
	}

	.gallery {
		position: absolute;
		top: 74px;
		left: 0;
		width: 90px;
		border: 1px solid #a0a0a0;
		background: #fff;
	}

	.galleryrow {
		display: flex;
	}

	.gallerylist {
		width: 71px;
		padding: 0 1px;
	}

	.gallerylist h3 {
		padding-left: 6px;
		border-top: 1px solid #d0d0d0;
		color: #00638a;
		font-size: 13px;
		line-height: 22px;
	}

	.gallerylist h3:first-child {
		margin-top: 1px;
	}

	.gallerylist button {
		justify-content: flex-start;
		gap: 4px;
		width: 71px;
		height: 22px;
		padding-left: 3px;
	}

	.hot {
		background: #d8eaee;
	}

	.galleryscroll {
		display: flex;
		flex-direction: column;
		justify-content: space-between;
		padding: 7px 4px 7px 5px;
	}

	.grip {
		display: flex;
		align-items: center;
		justify-content: flex-end;
		height: 10px;
		padding-right: 1px;
		background: #dcdcdc;
	}

	.tooltip {
		position: absolute;
		left: 59px;
		top: 104px;
		display: flex;
		gap: 6px;
		width: 304px;
		padding: 8px 7px 6px 8px;
		border: 1px solid #a0a0a0;
		background: #fff;
		font-size: 12px;
	}

	.tooltip strong {
		display: block;
		margin-bottom: 6px;
	}

	.tooltip p {
		white-space: nowrap;
	}

	/* selection bar */
	.selectbar {
		display: flex;
		align-items: center;
		flex: none;
		height: 27px;
		border-bottom: 1px solid #a0a0a0;
		font-size: 11px;
	}

	.selectbar .end {
		margin: auto 6px auto auto;
	}

	.menubtn {
		height: 20px;
		padding: 0 8px 0 13px;
		border-right: 1px solid #d9d9d9;
	}

	.menubtn svg {
		margin-right: 7px;
	}

	.menubtn .caret {
		margin-left: 6px;
	}

	.combo {
		position: relative;
		height: 22px;
	}

	.combo::after {
		content: '';
		position: absolute;
		right: 4px;
		top: 9px;
		border: 4px solid transparent;
		border-top: 5px solid #1a1a1a;
		border-bottom: 0;
	}

	.combo select {
		width: 100%;
		height: 22px;
		padding: 0 2px;
		border: 1px solid #707070;
		border-radius: 0;
		background: #fff;
		color: #1a1a1a;
		font: inherit;
		appearance: none;
	}

	.filter {
		width: 149px;
		margin-left: 12px;
	}

	.scope {
		width: 156px;
	}

	.pick {
		width: 25px;
		height: 24px;
	}

	.wide {
		width: 34px;
	}

	.picks {
		display: flex;
		padding: 0 6px 0 3px;
		border-right: 1px solid #d9d9d9;
	}

	.picks .caretbtn {
		width: 16px;
	}

	/* resource rail */
	.body {
		display: flex;
		flex: 1;
		min-height: 0;
		border-bottom: 1px solid #a0a0a0;
	}

	.rail {
		display: flex;
		flex-direction: column;
		flex: none;
		width: 37px;
		background: linear-gradient(90deg, #dcdcdc 36px, #a0a0a0 36px);
	}

	.rail button {
		width: 37px;
		height: 44px;
		padding-left: 2px;
	}

	.rail .first {
		height: 33px;
		padding-bottom: 3px;
		padding-left: 0;
		box-sizing: border-box;
	}

	.rail .active {
		align-self: flex-end;
		width: 34px;
		padding: 0;
		box-sizing: border-box;
		border: 1px solid #a0a0a0;
		border-right: none;
		background: #fff;
	}

	/* part navigator */
	.navigator {
		display: flex;
		flex-direction: column;
		flex: none;
		width: 305px;
		padding: 0 9px 6px 8px;
		border-right: 1px solid #a0a0a0;
	}

	.panelhead {
		display: flex;
		align-items: center;
		flex: none;
		gap: 4px;
		height: 25px;
		padding-bottom: 2px;
		margin-left: -2px;
	}

	.panelhead h2 {
		flex: 1;
		-webkit-text-stroke: 0.3px #1a1a1a;
	}

	.panelhead button {
		width: 12px;
		height: 11px;
		margin: 0 2px;
		border: 1px solid #000;
		border-top-width: 2px;
		box-sizing: border-box;
	}

	.treebox {
		display: flex;
		flex-direction: column;
		flex: 1;
		min-height: 0;
		border: 1px solid #d4d4d4;
	}

	.treeview {
		flex: 1;
		min-height: 0;
		overflow: hidden;
	}

	table {
		width: 100%;
		table-layout: fixed;
		border-collapse: separate;
		border-spacing: 0;
	}

	.narrow {
		width: 24px;
	}

	.note {
		width: 59px;
	}

	th {
		height: 19px;
		padding: 1px 0 0 6px;
		border-right: 1px solid #d4d4d4;
		border-bottom: 1px solid #d4d4d4;
		background: #f0f0f0;
		font-weight: normal;
		text-align: left;
	}

	th .caret {
		display: inline-block;
		margin-left: 14px;
		vertical-align: 2px;
	}

	td {
		height: 19px;
		padding: 0;
		border-right: 1px solid #e8e8e8;
		border-bottom: 1px solid #e8e8e8;
		line-height: 0;
		text-align: center;
	}

	th:last-child,
	td:last-child {
		border-right: none;
	}

	tbody tr:nth-child(even) {
		background: #fafafa;
	}

	.node {
		display: flex;
		align-items: center;
		height: 19px;
		padding-left: 5px;
		line-height: 16px;
		white-space: nowrap;
	}

	.node.child {
		padding-left: 24px;
	}

	.node span {
		margin-left: 3px;
	}

	.twig {
		stroke: #808080;
		stroke-width: 1;
		stroke-dasharray: 1 1;
		transform: translate(0.5px, 0.5px);
	}

	.twigbox {
		fill: #fff;
		stroke: #c4c4c4;
		stroke-width: 1;
		transform: translate(0.5px, 0.5px);
	}

	.twigsign {
		stroke: #000;
		stroke-width: 1;
		transform: translate(0.5px, 0.5px);
	}

	.muted {
		color: #9c9c9c;
	}

	.bold {
		font-weight: bold;
	}

	.hscroll {
		flex: none;
		height: 16px;
		padding: 0 50px 0 17px;
		background: #f0f0f0;
	}

	.hscroll i {
		display: block;
		height: 2px;
		margin-top: 7px;
		background: #868686;
	}

	.splitter {
		flex: none;
		height: 4px;
		margin: 2px 0 0;
		border: 1px solid #a0a0a0;
		background: #dcdcdc;
	}

	.fold {
		flex: none;
		justify-content: flex-start;
		gap: 9px;
		height: 24px;
		padding: 2px 0 0 10px;
		border-bottom: 2px solid #d0d0d0;
		color: #00638a;
		font-size: 14px;
	}

	.splitter + .fold {
		height: 26px;
		padding-top: 4px;
	}

	.fold::before {
		content: '';
		border: 4px solid transparent;
		border-left: 5px solid #00638a;
		border-right: 0;
	}

	/* graphics window */
	main {
		display: flex;
		flex-direction: column;
		flex: 1;
		min-width: 0;
	}

	.doctabs {
		display: flex;
		flex: none;
		border-bottom: 2px solid #005f87;
	}

	.doctabs button {
		gap: 5px;
		height: 24px;
		padding: 0 7px 0 6px;
		background: #005f87;
		color: #fff;
	}

	.canvas {
		display: block;
		flex: 1;
		min-height: 0;
		width: 100%;
	}

	.model ellipse,
	.model path {
		stroke: #3a3320;
		stroke-width: 1;
	}

	.model path {
		fill: url(#outer);
	}

	.flat {
		fill: #f3950a;
	}

	.frame { stroke: #2a2af0; stroke-dasharray: 4 1; stroke-width: 1; }
	.silver { stroke: #d8d8d8; stroke-width: 1.2; }
	.cone { fill: #d4d4d4; stroke: #b0b0b0; stroke-width: 0.5; }
	.green { fill: #3aa43e; }
	.navy { fill: #0838e0; }
	.crimson { fill: #c42828; }
	.cross { stroke: #0000f0; stroke-width: 2; }
	.cubeline { stroke: #a8a8a8; stroke-width: 1; }

	text {
		font: 13px 'Liberation Sans', sans-serif;
		text-anchor: middle;
	}

	.tsilver { fill: #dcdcdc; }
	.tgreen { fill: #2f9e35; }
	.tnavy { fill: #1440e8; }
	.tcrimson { fill: #c82c2c; }

	.status {
		flex: none;
		height: 21px;
		border-bottom: 3px solid #c8ece9;
		box-shadow: inset 0 -1px #a8b8b8;
	}

	/* input method bar */
	.ime {
		position: absolute;
		right: 539px;
		bottom: 3px;
		display: flex;
		align-items: center;
		height: 24px;
		border: 1px solid #b4cce8;
		background: #fff;
		color: #0a72d8;
		font-size: 15px;
		font-weight: bold;
	}

	.ime button {
		width: 24px;
	}

	.sogou {
		margin: -4px 1px 0 0;
	}

	.sogoubg { fill: #f4581e; }
	.sogous { stroke: #fff; stroke-width: 4; }
	.imeline { stroke: #0a72d8; stroke-width: 1.6; }
	.imefill { fill: #0a72d8; }
	.shirt { fill: url(#shirt); }
	.badge { fill: #ff5a3c; }

	.watermark {
		position: absolute;
		right: 7px;
		bottom: 10px;
		color: #dcdcdc;
		font-size: 37px;
		font-weight: 300;
		line-height: 48px;
		text-shadow: 1px 1px 1px #999;
		pointer-events: none;
	}
</style>
